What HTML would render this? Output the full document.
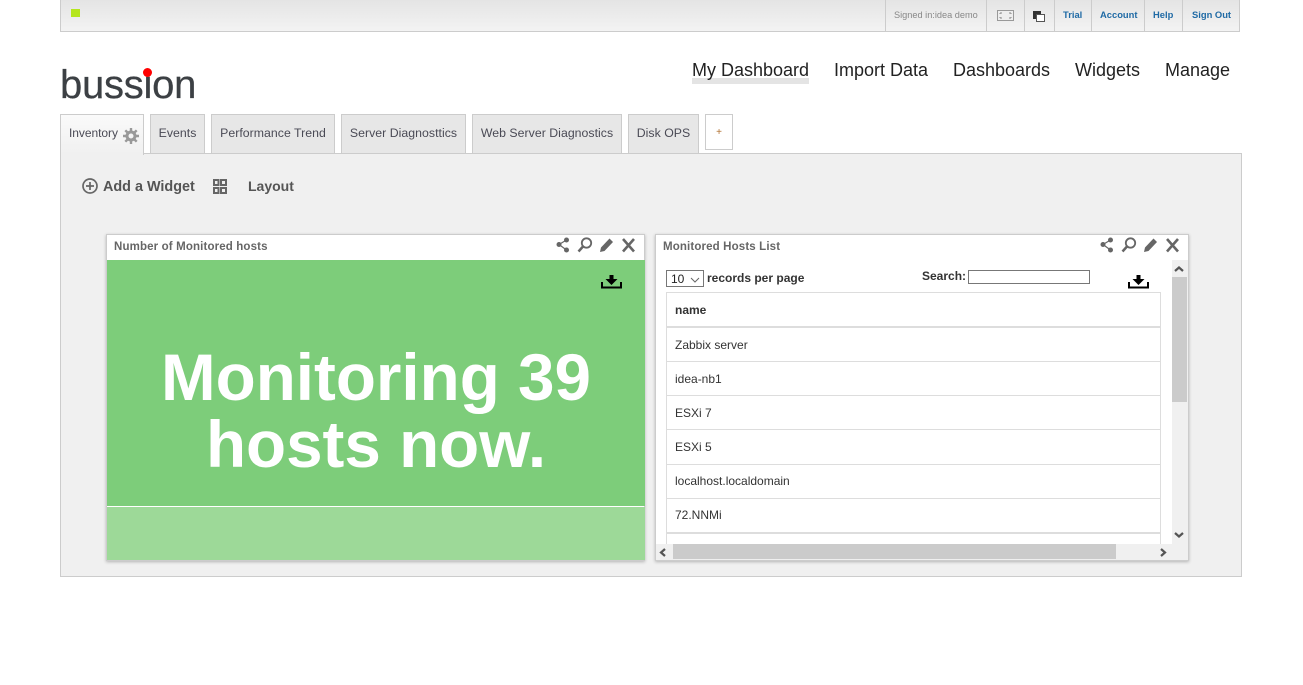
<!DOCTYPE html>
<html><head><meta charset="utf-8"><style>
html,body{margin:0;padding:0;width:1303px;height:685px;overflow:hidden;background:#fff;font-family:"Liberation Sans",sans-serif}
.a{position:absolute;white-space:nowrap;box-sizing:border-box}
#top{left:60px;top:0;width:1180px;height:32px;border:1px solid #ccc;border-top:0;background:linear-gradient(#e4e4e4,#f3f3f3)}
.sep{top:0;width:1px;height:31px;background:#ccc}
.tl{top:9px;font-size:9.4px;font-weight:bold;color:#1f6aa5;line-height:12px}
.nav{top:59px;font-size:18px;line-height:22px;color:#222}
.tab{top:114px;height:39px;border:1px solid #ccc;border-bottom:0;background:#e7e7e7;font-size:12.3px;color:#4a4a55;line-height:36px;text-align:center;letter-spacing:.03px}
.w{top:234px;height:327px;background:#fff;border:1px solid #ccc;box-shadow:0 1px 3px rgba(0,0,0,.25)}
.wt{top:240px;font-size:11.5px;font-weight:bold;color:#666;line-height:13px;letter-spacing:.14px;padding-top:.5px}
.row{left:666px;width:495px;border:1px solid #ddd;border-top:0;height:34px;font-size:12px;color:#333;line-height:35px;padding-left:8px}
</style></head><body>
<div class="a" id="top"></div>
<div class="a" style="left:71px;top:9px;width:9px;height:8px;background:#b5e61d"></div>
<div class="a sep" style="left:885px"></div><div class="a sep" style="left:986px"></div><div class="a sep" style="left:1024px"></div><div class="a sep" style="left:1054px"></div><div class="a sep" style="left:1091px"></div><div class="a sep" style="left:1144px"></div><div class="a sep" style="left:1182px"></div>
<div class="a" style="left:894px;top:9px;font-size:9.2px;line-height:12px;color:#888">Signed in:idea demo</div>
<svg class="a" style="left:997px;top:10px" width="17" height="11"><rect x=".5" y=".5" width="16" height="10" fill="#eee" stroke="#999"/><path d="M3 3h2M3 3v1M14 3h-2M14 3v1M3 8h2M3 8v-1M14 8h-2M14 8v-1" stroke="#888"/></svg>
<svg class="a" style="left:1033px;top:11px" width="12" height="11"><rect x="0" y="0" width="8" height="8" fill="#333"/><rect x="3.5" y="3.5" width="8" height="7" fill="#fff" stroke="#555"/></svg>
<div class="a tl" style="left:1063px">Trial</div><div class="a tl" style="left:1100px">Account</div><div class="a tl" style="left:1153px">Help</div><div class="a tl" style="left:1192px">Sign Out</div>

<div class="a" style="left:60px;top:60px;font-size:40px;line-height:50px;color:#3c4044;letter-spacing:-.25px;-webkit-text-stroke:.25px #3c4044">bussion</div>
<div class="a" style="left:143px;top:68px;width:9px;height:9px;border-radius:50%;background:#f00"></div>

<div class="a" style="left:692px;top:78px;width:117px;height:6px;background:#e4e4e4"></div>
<div class="a nav" style="left:692px">My Dashboard</div><div class="a nav" style="left:834px">Import Data</div><div class="a nav" style="left:953px">Dashboards</div><div class="a nav" style="left:1075px">Widgets</div><div class="a nav" style="left:1165px">Manage</div>

<div class="a" style="left:60px;top:153px;width:1182px;height:424px;background:#f0f0f0;border:1px solid #ccc"></div>
<div class="a tab" style="left:60px;width:84px;background:linear-gradient(#fafafa,#f0f0f0);text-align:left;padding-left:8px;height:41px;font-size:12px;letter-spacing:-.05px">Inventory</div>
<svg class="a" style="left:122px;top:127px" width="18" height="18" viewBox="0 0 18 18"><circle cx="9" cy="9" r="4" fill="none" stroke="#999" stroke-width="3"/><path d="M9 1v3M9 14v3M1 9h3M14 9h3M3.300 3.300l2.200 2.200M12.500 12.500l2.200 2.200M14.700 3.300l-2.200 2.200M5.500 12.500l-2.200 2.200" stroke="#999" stroke-width="2.400"/></svg>
<div class="a tab" style="left:150px;width:55px">Events</div>
<div class="a tab" style="left:211px;width:124px">Performance Trend</div>
<div class="a tab" style="left:341px;width:125px">Server Diagnosttics</div>
<div class="a tab" style="left:472px;width:150px">Web Server Diagnostics</div>
<div class="a tab" style="left:628px;width:71px">Disk OPS</div>
<div class="a tab" style="left:705px;width:28px;height:36px;background:#fff;border-bottom:1px solid #ccc;color:#b07030;font-size:10px;line-height:36px">+</div>

<svg class="a" style="left:81px;top:177px" width="18" height="18"><circle cx="9" cy="9" r="7" fill="none" stroke="#666" stroke-width="1.700"/><path d="M9 5v8M5 9h8" stroke="#666" stroke-width="1.700"/></svg>
<div class="a" style="left:103px;top:179px;font-size:14.4px;font-weight:bold;color:#555;line-height:17px">Add a Widget</div>
<svg class="a" style="left:213px;top:179px" width="14" height="15"><path d="M1 1h4.500v5H1zM8 1h5v5H8zM1 9h4.500v5H1zM8 9h5v5H8z" fill="none" stroke="#666" stroke-width="2"/></svg>
<div class="a" style="left:248px;top:178px;font-size:14px;font-weight:bold;color:#555;line-height:17px">Layout</div>

<div class="a w" style="left:106px;width:539px"></div>
<div class="a wt" style="left:114px">Number of Monitored hosts</div>
<div class="a" style="left:107px;top:260px;width:538px;height:246px;background:#7dcd7a"></div>
<div class="a" style="left:107px;top:507px;width:538px;height:53px;background:#9dd998"></div>
<div class="a" style="left:107px;top:344px;width:538px;text-align:center;font-size:65.6px;line-height:67px;font-weight:bold;color:#fff">Monitoring 39<br>hosts now.</div>

<div class="a w" style="left:655px;width:534px"></div>
<div class="a wt" style="left:663px">Monitored Hosts List</div>

<svg class="a" style="left:555px;top:236px" width="82" height="18" fill="#666" stroke="#666"><circle cx="4" cy="8.500" r="2.500" stroke="none"/><circle cx="11.500" cy="4" r="2.500" stroke="none"/><circle cx="11.500" cy="14" r="2.500" stroke="none"/><path d="M4 8.500L11.500 4M4 8.500L11.500 14" stroke-width="1.200"/><circle cx="31.500" cy="7" r="4.700" fill="none" stroke-width="1.800"/><path d="M28 10.500L23.500 15.500" stroke-width="2.500"/><path d="M45 16l1-4.500 8.500-9 3.500 3.500-8.500 9z" stroke="none"/><path d="M68 3l11 12.500M79 3L68 15.500" stroke-width="2.600" fill="none"/></svg>
<svg class="a" style="left:1099px;top:236px" width="82" height="18" fill="#666" stroke="#666"><circle cx="4" cy="8.500" r="2.500" stroke="none"/><circle cx="11.500" cy="4" r="2.500" stroke="none"/><circle cx="11.500" cy="14" r="2.500" stroke="none"/><path d="M4 8.500L11.500 4M4 8.500L11.500 14" stroke-width="1.200"/><circle cx="31.500" cy="7" r="4.700" fill="none" stroke-width="1.800"/><path d="M28 10.500L23.500 15.500" stroke-width="2.500"/><path d="M45 16l1-4.500 8.500-9 3.500 3.500-8.500 9z" stroke="none"/><path d="M68 3l11 12.500M79 3L68 15.500" stroke-width="2.600" fill="none"/></svg>

<svg class="a" style="left:601px;top:275px" width="22" height="15"><path d="M8.500 0h4v4h4l-6 6-6-6h4z" fill="#000"/><path d="M1 7v5.500h19V7" fill="none" stroke="#000" stroke-width="2"/></svg>
<svg class="a" style="left:1128px;top:275px" width="22" height="15"><path d="M8.500 0h4v4h4l-6 6-6-6h4z" fill="#000"/><path d="M1 7v5.500h19V7" fill="none" stroke="#000" stroke-width="2"/></svg>

<div class="a" style="left:666px;top:270px;width:38px;height:17px;border:1px solid #777;font-size:12px;line-height:16px;padding-left:4px;color:#222">10</div>
<svg class="a" style="left:690px;top:277px" width="10" height="6"><path d="M1 1l4 4 4-4" fill="none" stroke="#666"/></svg>
<div class="a" style="left:707px;top:271px;font-size:12px;font-weight:bold;color:#333;line-height:15px">records per page</div>
<div class="a" style="left:922px;top:269px;font-size:12px;font-weight:bold;color:#333;line-height:15px">Search:</div>
<div class="a" style="left:968px;top:270px;width:122px;height:14px;border:1px solid #777;background:#fff"></div>

<div class="a" style="left:666px;top:292px;width:495px;height:36px;border:1px solid #ddd;border-bottom:2px solid #ddd;font-size:12px;font-weight:bold;color:#333;line-height:34px;padding-left:8px">name</div>
<div class="a row" style="top:328px">Zabbix server</div>
<div class="a row" style="top:362px">idea-nb1</div>
<div class="a row" style="top:396px">ESXi 7</div>
<div class="a row" style="top:430px;height:35px">ESXi 5</div>
<div class="a row" style="top:465px;line-height:33px">localhost.localdomain</div>
<div class="a row" style="top:499px;line-height:33px">72.NNMi</div>
<div class="a" style="left:666px;top:533px;width:495px;height:11px;border:1px solid #ddd;border-bottom:0"></div>

<div class="a" style="left:1172px;top:260px;width:16px;height:284px;background:#f0f0f0"></div>
<div class="a" style="left:1172px;top:277px;width:15px;height:125px;background:#cbcbcb"></div>
<div class="a" style="left:656px;top:544px;width:532px;height:16px;background:#f0f0f0"></div>
<div class="a" style="left:673px;top:544px;width:443px;height:15px;background:#cbcbcb"></div>
<svg class="a" style="left:656px;top:260px" width="533" height="300" fill="none" stroke="#555" stroke-width="2.200"><path d="M519 11l4-3.500 4 3.500M519 273l4 3.500 4-3.500M9 289l-4 3.500 4 3.500M505 289l4 3.500-4 3.500"/></svg>
</body></html>
